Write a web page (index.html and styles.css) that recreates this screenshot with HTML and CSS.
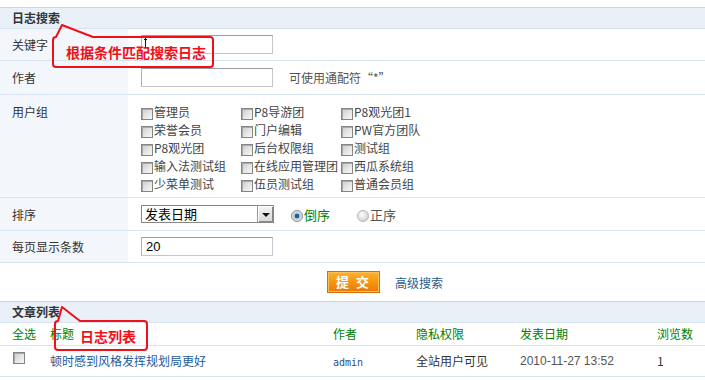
FILE: index.html
```html
<!DOCTYPE html>
<html>
<head>
    <meta charset="utf-8">
    <link rel="stylesheet" href="styles.css">
    <title>日志搜索</title>
</head>
<body>
    <div class="page">
        <div class="section-title">日志搜索</div>

        <div class="row row-keyword">
            <div class="label">关键字</div>
            <div class="field">
                <span class="input-wrap">
                    <input type="text" class="text-input">
                    <span class="ibeam"></span>
                </span>
            </div>
        </div>

        <div class="row row-author">
            <div class="label">作者</div>
            <div class="field">
                <input type="text" class="text-input">
                <span class="hint">可使用通配符“*”</span>
            </div>
        </div>

        <div class="row row-groups">
            <div class="label">用户组</div>
            <div class="field">
                <div class="group-grid">
                    <label class="check-item"><span class="checkbox"></span>管理员</label>
                    <label class="check-item"><span class="checkbox"></span>P8导游团</label>
                    <label class="check-item"><span class="checkbox"></span>P8观光团1</label>
                    <label class="check-item"><span class="checkbox"></span>荣誉会员</label>
                    <label class="check-item"><span class="checkbox"></span>门户编辑</label>
                    <label class="check-item"><span class="checkbox"></span>PW官方团队</label>
                    <label class="check-item"><span class="checkbox"></span>P8观光团</label>
                    <label class="check-item"><span class="checkbox"></span>后台权限组</label>
                    <label class="check-item"><span class="checkbox"></span>测试组</label>
                    <label class="check-item"><span class="checkbox"></span>输入法测试组</label>
                    <label class="check-item"><span class="checkbox"></span>在线应用管理团</label>
                    <label class="check-item"><span class="checkbox"></span>西瓜系统组</label>
                    <label class="check-item"><span class="checkbox"></span>少菜单测试</label>
                    <label class="check-item"><span class="checkbox"></span>伍员测试组</label>
                    <label class="check-item"><span class="checkbox"></span>普通会员组</label>
                </div>
            </div>
        </div>

        <div class="row row-order">
            <div class="label">排序</div>
            <div class="field">
                <div class="select">
                    <span class="select-text">发表日期</span>
                    <span class="select-arrow"></span>
                </div>
                <label class="radio-item checked"><span class="radio"></span>倒序</label>
                <label class="radio-item"><span class="radio"></span>正序</label>
            </div>
        </div>

        <div class="row row-perpage">
            <div class="label">每页显示条数</div>
            <div class="field">
                <input type="text" class="text-input" value="20">
            </div>
        </div>

        <div class="actions">
            <button class="submit-btn">提 交</button>
            <a href="#" class="adv-link">高级搜索</a>
        </div>

        <div class="section-title list-title">文章列表</div>

        <table class="list-table">
            <colgroup>
                <col style="width:50px">
                <col style="width:283px">
                <col style="width:83px">
                <col style="width:104px">
                <col style="width:137px">
                <col style="width:48px">
            </colgroup>
            <thead>
                <tr>
                    <th class="first">全选</th>
                    <th>标题</th>
                    <th>作者</th>
                    <th>隐私权限</th>
                    <th>发表日期</th>
                    <th>浏览数</th>
                </tr>
            </thead>
            <tbody>
                <tr>
                    <td class="first"><span class="checkbox"></span></td>
                    <td><a href="#" class="title-link">顿时感到风格发挥规划局更好</a></td>
                    <td><a href="#" class="author-link">admin</a></td>
                    <td>全站用户可见</td>
                    <td class="date">2010-11-27 13:52</td>
                    <td>1</td>
                </tr>
            </tbody>
        </table>

        <!-- annotation callouts -->
        <div class="callout">
            <svg width="705" height="380" viewBox="0 0 705 380">
                <path d="M62,25 L93,37 H210 Q213,37 213,40 V64 Q213,67 210,67 H56 Q53,67 53,64 V40 Q53,37 56,37 Z" />
                <path d="M62,307 L80,321 H144 Q147,321 147,324 V347 Q147,350 144,350 H58 Q55,350 55,347 V324 Q55,321 58,321 Z" />
            </svg>
            <span class="callout-text text-search">根据条件匹配搜索日志</span>
            <span class="callout-text text-list">日志列表</span>
        </div>
    </div>
</body>
</html>
```

FILE: styles.css
```css
* {
    box-sizing: border-box;
}

body {
    margin: 0;
    font-family: "Noto Sans CJK SC", "Liberation Sans", sans-serif;
    font-size: 12px;
    color: #333;
    background: #fff;
}

.page {
    position: relative;
    width: 705px;
    padding-top: 7px;
}

.section-title {
    height: 22px;
    line-height: 20px;
    padding-left: 12px;
    background: #e9f0f8;
    border-top: 1px solid #c8d5e3;
    border-bottom: 1px solid #d6e3f1;
    font-weight: bold;
    color: #333;
}

.row {
    display: flex;
    border-bottom: 1px solid #d6e3f1;
}

.row .label {
    width: 128px;
    padding-left: 12px;
    background: #f3f7fc;
    display: flex;
    align-items: center;
}

.row .field {
    flex: 1;
    padding-left: 13px;
    display: flex;
    align-items: center;
}

.row-keyword { height: 32px; }
.row-author { height: 34px; }
.row-order { height: 33px; }
.row-perpage { height: 32px; }

.row-groups {
    height: 103px;
}

.row-groups .label {
    align-items: flex-start;
    padding-top: 8px;
    line-height: 18px;
}

.row-groups .field {
    align-items: flex-start;
    padding-top: 8px;
}

.input-wrap {
    position: relative;
    display: inline-block;
}

.text-input {
    width: 132px;
    height: 19px;
    padding: 0 4px;
    border: 1px solid #c3c6cc;
    border-top-color: #999da4;
    border-left-color: #aeb2b8;
    font-family: "Liberation Sans", sans-serif;
    font-size: 13px;
    color: #000;
    outline: none;
}

.ibeam {
    position: absolute;
    left: 4px;
    top: 2px;
    width: 1px;
    height: 10px;
    background: #112;
}

.ibeam::before {
    content: "";
    position: absolute;
    left: -1px;
    top: 2px;
    width: 3px;
    height: 1px;
    background: #112;
}

.hint {
    margin-left: 16px;
    color: #555;
}

.group-grid {
    display: grid;
    grid-template-columns: 100px 100px 100px;
    grid-auto-rows: 18px;
}

.check-item {
    display: flex;
    align-items: center;
    white-space: nowrap;
    color: #444;
    line-height: 18px;
}

.checkbox {
    display: inline-block;
    width: 12px;
    height: 12px;
    margin-top: 3px;
    margin-right: 1px;
    border: 1px solid #858585;
    background: linear-gradient(135deg, #c9c9c9 0%, #e6e6e6 55%, #f6f6f6 100%);
    box-shadow: inset 1px 1px 0 #a9a9a9;
    flex-shrink: 0;
}

.select {
    display: flex;
    width: 133px;
    height: 18px;
    border: 1px solid #868686;
    background: #fff;
}

.select-text {
    flex: 1;
    padding-left: 3px;
    line-height: 16px;
    font-size: 13px;
    color: #000;
}

.select-arrow {
    position: relative;
    width: 16px;
    border-left: 1px solid #9a9a9a;
    background: linear-gradient(#f4f4f4, #d8d8d8);
    box-shadow: inset 1px 1px 0 #fff, inset -1px -1px 0 #888;
}

.select-arrow::after {
    content: "";
    position: absolute;
    left: 4px;
    top: 7px;
    border-left: 4px solid transparent;
    border-right: 4px solid transparent;
    border-top: 4px solid #111;
}

.radio-item {
    display: flex;
    align-items: center;
    color: #555;
    font-size: 13px;
    margin-left: 17px;
}

.radio-item + .radio-item {
    margin-left: 27px;
}

.radio-item.checked {
    color: #008000;
}

.radio {
    display: inline-block;
    width: 12px;
    height: 12px;
    margin-top: 3px;
    margin-right: 1px;
    border-radius: 50%;
    border: 1px solid #b4b4b4;
    background: radial-gradient(circle at 40% 35%, #ffffff 0%, #dcdcdc 60%, #bdbdbd 100%);
}

.radio-item.checked .radio {
    border-color: #8c8f94;
    background: radial-gradient(circle at 50% 50%, #0c5fa0 0%, #1f6bb0 30%, #c8ccd2 38%, #eef0f2 100%);
}

.actions {
    height: 38px;
    display: flex;
    align-items: center;
    padding-left: 327px;
}

.submit-btn {
    width: 53px;
    height: 22px;
    padding: 0;
    border: 1px solid #d76d04;
    background: linear-gradient(#ffb22c, #f5960f 50%, #e8790a);
    box-shadow: inset 0 0 0 1px #fcbf5a;
    color: #fff;
    font-family: "Noto Sans CJK SC", sans-serif;
    font-size: 13px;
    font-weight: bold;
    letter-spacing: 2px;
    line-height: 18px;
    cursor: pointer;
}

.adv-link {
    margin-left: 15px;
    color: #2c5a8f;
    text-decoration: none;
}

.list-title {
    margin-top: 0;
}

.list-table {
    width: 705px;
    border-collapse: collapse;
    table-layout: fixed;
}

.list-table th,
.list-table td {
    padding: 0;
    text-align: left;
    border-bottom: 1px solid #d6e3f1;
    white-space: nowrap;
}

.list-table th {
    height: 22px;
    font-weight: normal;
    color: #008000;
}

.list-table td {
    height: 31px;
}

.list-table .first {
    padding-left: 12px;
}

.list-table td.first .checkbox {
    margin-top: 0;
    position: relative;
    top: -2px;
    left: 1px;
}

.title-link {
    color: #245a9b;
    text-decoration: none;
}

.author-link {
    font-family: "DejaVu Sans Mono", monospace;
    font-size: 10px;
    color: #1f4f80;
    text-decoration: none;
}

.list-table .date {
    font-family: "Liberation Sans", sans-serif;
    font-size: 12px;
    color: #555;
}

.callout {
    position: absolute;
    left: 0;
    top: 0;
    width: 705px;
    height: 380px;
    pointer-events: none;
}

.callout svg {
    position: absolute;
    left: 0;
    top: 0;
}

.callout path {
    fill: none;
    stroke: #f0101a;
    stroke-width: 2;
    stroke-linejoin: round;
}

.callout-text {
    position: absolute;
    font-size: 14px;
    font-weight: bold;
    color: #f0101a;
    line-height: 18px;
    white-space: nowrap;
}

.text-search {
    left: 66px;
    top: 43px;
}

.text-list {
    left: 80px;
    top: 327px;
}
```
